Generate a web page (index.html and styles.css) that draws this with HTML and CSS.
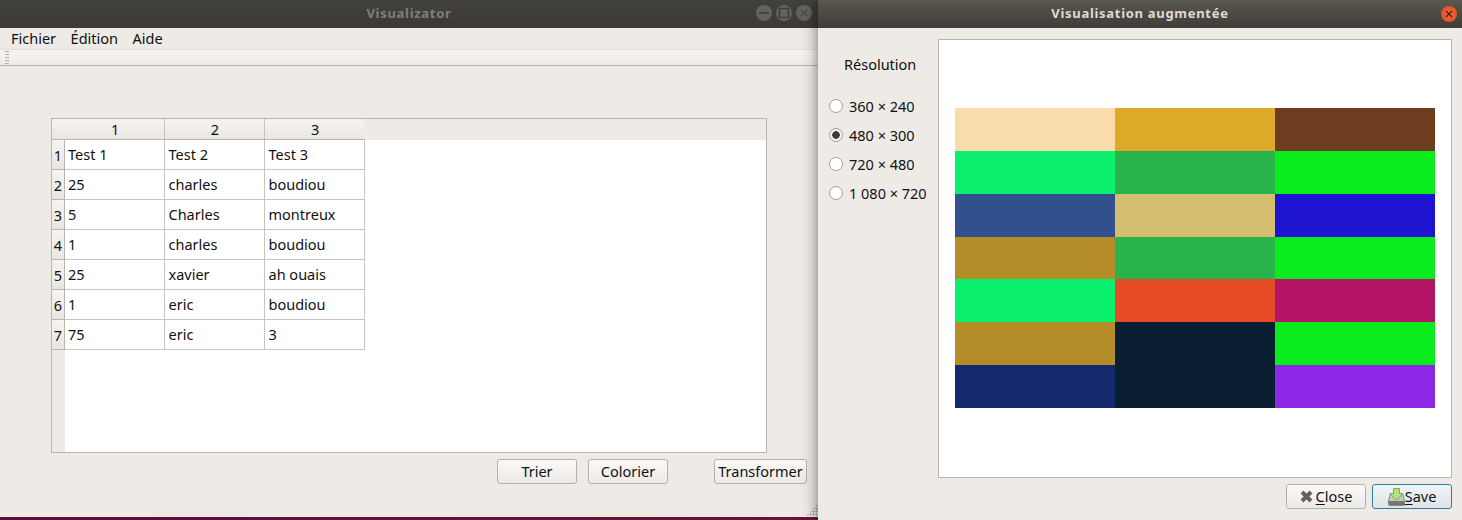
FILE: index.html
```html
<!DOCTYPE html>
<html lang="fr">
<head>
  <meta charset="UTF-8">
  <title>Visualizator</title>
  <link rel="stylesheet" href="styles.css">
</head>
<body>
  <div class="desktop">

    <div class="window main-window">
      <div class="titlebar inactive">
        <div class="wm-buttons">
          <span class="wm-btn"><svg width="12" height="12" viewBox="0 0 12 12"><path d="M1 6h10" stroke="#3c3b37" stroke-width="1.5"/></svg></span>
          <span class="wm-btn"><svg width="12" height="12" viewBox="0 0 12 12"><rect x="1.5" y="1.5" width="9" height="9" fill="none" stroke="#3c3b37" stroke-width="1.3"/></svg></span>
          <span class="wm-btn"><svg width="12" height="12" viewBox="0 0 12 12"><path d="M2.5 2.5l7 7M9.5 2.5l-7 7" stroke="#4a4945" stroke-width="1.3"/></svg></span>
        </div>
        <span class="title">Visualizator</span>
      </div>
      <div class="menubar">
        <span>Fichier</span>
        <span>Édition</span>
        <span>Aide</span>
      </div>
      <div class="toolbar"><i class="handle"></i></div>

      <div class="content">
        <div class="table-frame">
          <table class="sheet">
            <thead>
              <tr><th class="corner">1</th><th>2</th><th>3</th></tr>
            </thead>
            <tbody>
              <tr><td><b>1</b>Test 1</td><td>Test 2</td><td>Test 3</td></tr>
              <tr><td><b>2</b>25</td><td>charles</td><td>boudiou</td></tr>
              <tr><td><b>3</b>5</td><td>Charles</td><td>montreux</td></tr>
              <tr><td><b>4</b>1</td><td>charles</td><td>boudiou</td></tr>
              <tr><td><b>5</b>25</td><td>xavier</td><td>ah ouais</td></tr>
              <tr><td><b>6</b>1</td><td>eric</td><td>boudiou</td></tr>
              <tr><td><b>7</b>75</td><td>eric</td><td>3</td></tr>
            </tbody>
          </table>
        </div>
        <div class="actions">
          <button class="btn w80">Trier</button>
          <button class="btn w80">Colorier</button>
          <button class="btn w93 push">Transformer</button>
        </div>
      </div>
      <i class="grip"></i>
    </div>

    <div class="window view-window">
      <div class="titlebar">
        <span class="wm-btn close"><svg width="10" height="10" viewBox="0 0 10 10"><path d="M2 2l6 6M8 2l-6 6" stroke="#4a2412" stroke-width="1.4"/></svg></span>
        <span class="title">Visualisation augmentée</span>
      </div>
      <div class="view-body">
        <div class="view-main">
          <div class="side">
            <div class="side-title">Résolution</div>
            <label class="radio"><i></i>360 × 240</label>
            <label class="radio on"><i></i>480 × 300</label>
            <label class="radio"><i></i>720 × 480</label>
            <label class="radio"><i></i>1 080 × 720</label>
          </div>
          <div class="canvas">
            <div class="swatches">
              <div style="background:#fadcaa"></div><div style="background:#dcaa28"></div><div style="background:#6e3c1e"></div>
              <div style="background:#0af06e"></div><div style="background:#28b44b"></div><div style="background:#0aeb1e"></div>
              <div style="background:#32508c"></div><div style="background:#d2be6e"></div><div style="background:#1e14d2"></div>
              <div style="background:#b48c28"></div><div style="background:#28b44b"></div><div style="background:#0aeb1e"></div>
              <div style="background:#0af06e"></div><div style="background:#e64b28"></div><div style="background:#b41464"></div>
              <div style="background:#b48c28"></div><div style="background:#0a1e32"></div><div style="background:#0aeb1e"></div>
              <div style="background:#14286e"></div><div style="background:#0a1e32"></div><div style="background:#8c28e6"></div>
            </div>
          </div>
        </div>
        <div class="dialog-buttons">
          <button class="btn w80">
            <svg width="13" height="13" viewBox="0 0 13 13"><path d="M2 2l9 9M11 2l-9 9" stroke="#62625f" stroke-width="4"/></svg><span><u>C</u>lose</span>
          </button>
          <button class="btn w80 default">
            <svg width="17" height="18" viewBox="0 0 17 18">
              <path d="M2.500 5.500h12l2 7v4a1 1 0 0 1-1 1h-14a1 1 0 0 1-1-1v-4z" fill="#c9c9c4" stroke="#85857f"/>
              <rect x="1" y="13" width="15" height="4" fill="#77776f"/>
              <path d="M5.500 .5h6v5h3.500l-6.500 7-6.500-7h3.500z" fill="#b4e07e" stroke="#78ad50"/>
            </svg><span><u>S</u>ave</span>
          </button>
        </div>
      </div>
    </div>

  </div>
</body>
</html>
```

FILE: styles.css
```css
* {
  box-sizing: border-box;
}

html, body {
  margin: 0;
  height: 100%;
  overflow: hidden;
}

body {
  font-family: "Noto Sans", "Open Sans", sans-serif;
  font-size: 14.5px;
  color: #111;
}

.desktop {
  position: relative;
  width: 1462px;
  height: 520px;
  background: linear-gradient(90deg, #5e0b40, #7c1532);
}

.window {
  position: absolute;
  top: 0;
  display: flex;
  flex-direction: column;
  background: #eeebe7;
}

.main-window {
  left: 0;
  width: 818px;
  height: 517px;
}

.view-window {
  left: 818px;
  width: 644px;
  height: 520px;
  box-shadow: 0 0 14px rgba(0, 0, 0, 0.55);
}

/* title bars */
.titlebar {
  position: relative;
  flex: none;
  height: 28px;
  padding-bottom: 2px;
  display: flex;
  align-items: center;
  justify-content: center;
  background: linear-gradient(#5a574f, #3e3c37);
}

.titlebar.inactive {
  background: linear-gradient(#43413c, #3b3a36);
}

.title {
  font-size: 13px;
  font-weight: 700;
  letter-spacing: 0.7px;
  color: #dfdbd2;
}

.inactive .title {
  color: #7f7e79;
}

.wm-buttons {
  position: absolute;
  top: 5px;
  right: 6px;
  display: flex;
  gap: 4px;
}

.wm-btn {
  width: 16px;
  height: 16px;
  border-radius: 50%;
  background: #63625d;
  display: flex;
  align-items: center;
  justify-content: center;
}

.wm-btn.close {
  position: absolute;
  top: 6px;
  right: 5px;
  background: radial-gradient(#f0693a, #dc4a1f);
}

/* menu and tool bar */
.menubar {
  flex: none;
  height: 22px;
  padding: 0 0 2px 11px;
  display: flex;
  align-items: center;
  gap: 14.5px;
  border-bottom: 1px solid #e2dfda;
}

.toolbar {
  flex: none;
  height: 16px;
  display: flex;
  background: linear-gradient(#f6f4f1, #efece8);
  border-bottom: 1px solid #b9b5af;
}

.handle {
  width: 4px;
  margin-left: 5px;
  background: radial-gradient(#b5b1aa 45%, transparent 50%) 0 0 / 2px 3px;
}

.content {
  flex: 1;
  display: flex;
  flex-direction: column;
  padding: 52px 11px 0 51px;
}

/* table */
.table-frame {
  position: relative;
  width: 716px;
  height: 335px;
  border: 1px solid #b9b5af;
  background: linear-gradient(90deg, #eeebe7 13px, #fff 13px);
}

.table-frame::before {
  content: "";
  position: absolute;
  left: 0;
  top: 0;
  right: 0;
  height: 21px;
  background: #eeebe7;
}

.sheet {
  position: relative;
  border-collapse: collapse;
  table-layout: fixed;
  width: 312px;
}

.sheet th {
  width: 100px;
  height: 20px;
  padding: 0 0 0 2px;
  font-weight: 400;
  text-align: center;
  background: linear-gradient(#f6f4f1, #e9e6e2);
  border-right: 1px solid #c8c5c0;
  border-bottom: 1px solid #b9b5af;
}

.sheet th:last-child {
  border-right: 0;
}

.sheet th.corner {
  width: 112px;
  padding-left: 15px;
}

.sheet td {
  position: relative;
  height: 30px;
  padding: 0 0 2px 4px;
  background: #fff;
  border-right: 1px solid #c8c5c0;
  border-bottom: 1px solid #c8c5c0;
  white-space: nowrap;
}

.sheet td:first-child {
  padding-left: 16px;
}

.sheet td b {
  position: absolute;
  left: 0;
  top: 0;
  bottom: -1px;
  width: 13px;
  display: flex;
  align-items: center;
  justify-content: center;
  font-weight: 400;
  background: linear-gradient(#f6f4f1, #e9e6e2);
  border-right: 1px solid #b9b5af;
  border-bottom: 1px solid #b9b5af;
}

/* buttons */
.actions {
  display: flex;
  gap: 11px;
  margin-top: 6px;
  padding-left: 446px;
}

.push {
  margin-left: 35px;
}

.btn {
  height: 25px;
  padding: 0 0 2px;
  display: flex;
  align-items: center;
  justify-content: center;
  font: inherit;
  color: inherit;
  background: linear-gradient(#fbfafa, #ece9e5);
  border: 1px solid #b5b1aa;
  border-radius: 3px;
}

.btn svg {
  margin-top: 2px;
}

.w80 {
  width: 80px;
}

.w93 {
  width: 93px;
}

.btn.default {
  background: linear-gradient(#f3f5f6, #dde3e6);
  border-color: #2f7ea3;
}

.grip {
  position: absolute;
  right: 0;
  bottom: 1px;
  width: 12px;
  height: 12px;
  background: radial-gradient(#aaa6a0 45%, transparent 50%) 0 0 / 3px 3px;
  clip-path: polygon(100% 0, 100% 100%, 0 100%);
}

/* second window */
.view-body {
  flex: 1;
  display: flex;
  flex-direction: column;
  padding: 11px 10px 11px 0;
}

.view-main {
  flex: none;
  display: flex;
  height: 439px;
}

.side {
  width: 120px;
  flex: none;
  padding-left: 12px;
}

.side-title {
  height: 52px;
  padding: 15px 0 0 14px;
}

.radio {
  display: flex;
  align-items: center;
  gap: 6px;
  height: 29px;
  margin-left: -1px;
  white-space: nowrap;
}

.radio i {
  width: 14px;
  height: 14px;
  border-radius: 50%;
  background: #fff;
  border: 1px solid #a5a29c;
}

.radio.on i {
  background: radial-gradient(#3c3c3c 3.5px, #f4f3f1 4px);
}

.canvas {
  width: 514px;
  height: 439px;
  padding: 68px 16px 0 16px;
  background: #fff;
  border: 1px solid #b9b5af;
}

.swatches {
  width: 480px;
  height: 300px;
  display: grid;
  grid-template-columns: repeat(3, 160px);
  grid-template-rows: repeat(7, 1fr);
}

.dialog-buttons {
  display: flex;
  justify-content: flex-end;
  gap: 6px;
  margin-top: 6px;
}

.dialog-buttons .btn {
  gap: 3px;
}

.dialog-buttons .default {
  gap: 0;
}

.dialog-buttons u {
  text-underline-offset: 2px;
}
```
